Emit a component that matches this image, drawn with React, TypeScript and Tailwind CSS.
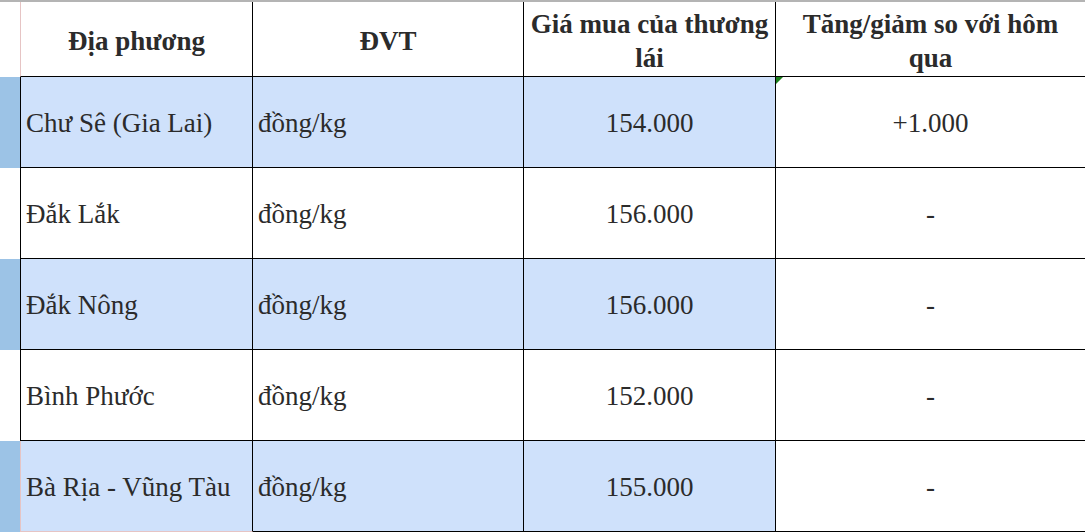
import React from 'react';

type Row = { place: string; unit: string; price: string; change: string; hl: boolean };

const rows: Row[] = [
  { place: 'Chư Sê (Gia Lai)', unit: 'đồng/kg', price: '154.000', change: '+1.000', hl: true },
  { place: 'Đắk Lắk', unit: 'đồng/kg', price: '156.000', change: '-', hl: false },
  { place: 'Đắk Nông', unit: 'đồng/kg', price: '156.000', change: '-', hl: true },
  { place: 'Bình Phước', unit: 'đồng/kg', price: '152.000', change: '-', hl: false },
  { place: 'Bà Rịa - Vũng Tàu', unit: 'đồng/kg', price: '155.000', change: '-', hl: true },
];

export default function App() {
  return (
    <div className="w-[1085px] h-[532px] bg-white overflow-hidden border-t-2 border-[#b4b4b4] text-[#2b2b2b] font-['Liberation_Serif','Times_New_Roman',serif]">
      <div className="grid grid-cols-[20px_233px_271px_252px_1fr]">
        {/* Header */}
        <div className="h-[75px]" />
        <HeadCell first>Địa phương</HeadCell>
        <HeadCell>ĐVT</HeadCell>
        <HeadCell>
          Giá mua của thương
          <br />
          lái
        </HeadCell>
        <HeadCell last>
          Tăng/giảm so với hôm
          <br />
          qua
        </HeadCell>

        {rows.map((r, i) => {
          const isLast = i === rows.length - 1;
          const fill = r.hl ? 'bg-[#cfe1fb]' : 'bg-white';
          const bottom = isLast ? 'border-b border-[#e6c4c4]' : 'border-b border-black';
          return (
            <React.Fragment key={r.place}>
              <div className={`h-[91px] ${r.hl ? 'bg-[#9cc3e6]' : 'bg-white'}`} />
              <div className={`h-[91px] flex items-center pl-[5px] pt-[2px] border-l border-[#e6c4c4] border-r border-r-black text-[27px] leading-none ${fill} ${bottom}`}>
                {r.place}
              </div>
              <div className={`h-[91px] flex items-center pl-[5px] pt-[2px] border-r border-black text-[27px] leading-none ${fill} ${bottom}`}>
                {r.unit}
              </div>
              <div className={`h-[91px] flex items-center justify-center pt-[2px] border-r border-black text-[27px] leading-none ${fill} ${bottom}`}>
                {r.price}
              </div>
              <div className="relative h-[91px] flex items-center justify-center pt-[2px] border-b border-black text-[27px] leading-none bg-white">
                {i === 0 && (
                  <span className="absolute left-0 top-0 w-0 h-0 border-t-[7px] border-t-[#1a7f1a] border-r-[7px] border-r-transparent" />
                )}
                {r.change}
              </div>
            </React.Fragment>
          );
        })}
      </div>
    </div>
  );
}

function HeadCell({ children, first, last }: { children: React.ReactNode; first?: boolean; last?: boolean }) {
  return (
    <div
      className={`h-[75px] flex items-center justify-center pt-[3px] text-center font-bold text-[27px] leading-[34px] border-b border-black ${
        first ? 'border-l border-l-[#e6c4c4]' : ''
      } ${last ? '' : 'border-r border-r-black'}`}
    >
      <span>{children}</span>
    </div>
  );
}
